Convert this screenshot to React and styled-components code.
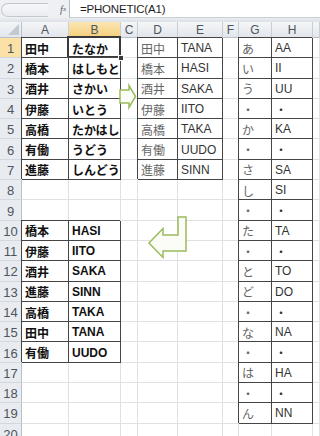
import React from 'react';
import styled, { createGlobalStyle, css } from 'styled-components';

const GlobalStyle = createGlobalStyle`
  html, body {
    margin: 0;
    padding: 0;
    background: #ffffff;
    overflow: hidden;
  }
  body {
    font-family: "Liberation Sans", "Noto Sans CJK JP", sans-serif;
  }
`;

const Window = styled.div`
  width: 320px;
  height: 436px;
  overflow: hidden;
  background: #e4e8ed;
`;

const FormulaBar = styled.div`
  display: flex;
  align-items: stretch;
  height: 18px;
  background: #eef0f3;
`;

const NameBox = styled.div`
  width: 46px;
  margin: 3px 0 1px 1px;
  border: 1px solid #c3c8cf;
  border-right: none;
  border-radius: 7px 0 0 7px;
  background: linear-gradient(#f6f7f9, #e9ecf0);
`;

const FxButton = styled.div`
  width: 21px;
  display: flex;
  align-items: center;
  justify-content: flex-end;
  padding-right: 3px;
  box-sizing: border-box;
  font-family: "Liberation Serif", serif;
  font-style: italic;
  font-size: 10px;
  color: #555d66;
  sub {
    font-size: 7px;
    vertical-align: -1px;
  }
`;

const FormulaInput = styled.div`
  flex: 1;
  display: flex;
  align-items: center;
  padding-left: 10px;
  background: #ffffff;
  border-left: 1px solid #b4bac3;
  border-bottom: 1px solid #c9ced5;
  font-size: 11.5px;
  letter-spacing: -0.2px;
  color: #1e1e1e;
`;

const Strip = styled.div`
  height: 4px;
  background: linear-gradient(#e9ecf0, #dde2e8);
`;

const Sheet = styled.div`
  position: relative;
  display: grid;
  grid-template-columns: 22px 47px 52px 17px 40px 45px 16px 33px 41px 1fr;
  grid-template-rows: 16px;
  grid-auto-rows: 20.3px;
  background: #ffffff;
`;

const headBase = css`
  box-sizing: border-box;
  display: flex;
  align-items: center;
  justify-content: center;
  color: #4d5560;
  font-family: "Liberation Sans", sans-serif;
`;

const Corner = styled.div`
  ${headBase};
  position: relative;
  background: linear-gradient(#f3f5f7, #e3e7ec);
  border-right: 1px solid #b9c0c9;
  border-bottom: 1px solid #b9c0c9;
  svg {
    position: absolute;
    right: 2px;
    bottom: 2px;
  }
`;

const ColHead = styled.div`
  ${headBase};
  font-size: 12px;
  border-right: 1px solid #c8ced6;
  border-bottom: 1px solid #b9c0c9;
  background: ${(p) =>
    p.$active
      ? 'linear-gradient(#fbe6b3, #f6cf7d)'
      : 'linear-gradient(#f5f6f8, #e2e6eb)'};
`;

const RowHead = styled.div`
  ${headBase};
  font-size: 13px;
  padding-top: 2px;
  border-right: 1px solid #b9c0c9;
  border-bottom: 1px solid #d3d8de;
  background: ${(p) => (p.$active ? '#fbe1a6' : '#e8ebef')};
`;

const Cell = styled.div`
  position: relative;
  box-sizing: border-box;
  display: flex;
  align-items: center;
  padding: 1px 0 0 3px;
  white-space: nowrap;
  overflow: visible;
  font-size: 12px;
  font-weight: ${(p) => (p.$bold ? 700 : 400)};
  color: ${(p) => p.$tone};
  border-right: 1px solid #dfe1e3;
  border-bottom: 1px solid #dfe1e3;
  background: #ffffff;

  ${(p) =>
    p.$boxed &&
    css`
      border-color: #454545;
      box-shadow: -1px -1px 0 0 #454545;
    `}

  ${(p) =>
    p.$selected &&
    css`
      &::after {
        content: '';
        position: absolute;
        left: -2px;
        top: -2px;
        right: -1px;
        bottom: -1px;
        border: 2px solid #3a3a3a;
      }
      &::before {
        content: '';
        position: absolute;
        right: -4px;
        bottom: -4px;
        width: 4px;
        height: 4px;
        background: #3a3a3a;
        border: 1px solid #ffffff;
        z-index: 2;
      }
    `}
`;

const Shapes = styled.svg`
  position: absolute;
  left: 0;
  top: 0;
  pointer-events: none;
`;

const COLS = ['A', 'B', 'C', 'D', 'E', 'F', 'G', 'H', 'I'];
const ROWS = Array.from({ length: 20 }, (_, i) => i + 1);

const kana = [
  ['あ', 'AA'], ['い', 'II'], ['う', 'UU'], ['・', '・'], ['か', 'KA'],
  ['・', '・'], ['さ', 'SA'], ['し', 'SI'], ['・', '・'], ['た', 'TA'],
  ['・', '・'], ['と', 'TO'], ['ど', 'DO'], ['・', '・'], ['な', 'NA'],
  ['・', '・'], ['は', 'HA'], ['・', '・'], ['ん', 'NN'],
];

const names = [
  ['田中', 'たなか', 'TANA'],
  ['橋本', 'はしもと', 'HASI'],
  ['酒井', 'さかい', 'SAKA'],
  ['伊藤', 'いとう', 'IITO'],
  ['高橋', 'たかはし', 'TAKA'],
  ['有働', 'うどう', 'UUDO'],
  ['進藤', 'しんどう', 'SINN'],
];

const sorted = [
  ['橋本', 'HASI'], ['伊藤', 'IITO'], ['酒井', 'SAKA'], ['進藤', 'SINN'],
  ['高橋', 'TAKA'], ['田中', 'TANA'], ['有働', 'UUDO'],
];

function cellInfo(col, row) {
  const info = { text: '', boxed: false, bold: false, tone: '#333333' };
  if (row <= 7 && (col === 'A' || col === 'B')) {
    const n = names[row - 1];
    info.text = col === 'A' ? n[0] : n[1];
    info.boxed = true;
    info.bold = true;
    info.tone = '#111111';
  }
  if (row <= 7 && (col === 'D' || col === 'E')) {
    const n = names[row - 1];
    info.text = col === 'D' ? n[0] : n[2];
    info.boxed = true;
    info.tone = col === 'D' ? '#666666' : '#333333';
  }
  if (row >= 10 && row <= 16 && (col === 'A' || col === 'B')) {
    const s = sorted[row - 10];
    info.text = col === 'A' ? s[0] : s[1];
    info.boxed = true;
    info.bold = true;
    info.tone = '#111111';
  }
  if (row <= 19 && (col === 'G' || col === 'H')) {
    const k = kana[row - 1];
    info.text = col === 'G' ? k[0] : k[1];
    info.boxed = true;
    info.tone = col === 'G' ? '#666666' : '#333333';
  }
  return info;
}

function Arrows() {
  return (
    <Shapes width="320" height="414" viewBox="0 22 320 414">
      <polygon
        points="120,90 129,90 129,85.5 135.5,96.5 129,107.5 129,103 120,103"
        fill="#fbfcf8"
        stroke="#9bbb59"
        strokeWidth="1.5"
        strokeLinejoin="miter"
      />
      <polygon
        points="178,217 186,217 186,251 163,251 163,257.5 149,243 163,228.5 163,235 178,235"
        fill="#fbfcf8"
        stroke="#9bbb59"
        strokeWidth="1.5"
        strokeLinejoin="miter"
      />
    </Shapes>
  );
}

export default function App() {
  return (
    <Window>
      <GlobalStyle />
      <FormulaBar>
        <NameBox />
        <FxButton>
          f<sub>x</sub>
        </FxButton>
        <FormulaInput>=PHONETIC(A1)</FormulaInput>
      </FormulaBar>
      <Strip />
      <Sheet>
        <Corner>
          <svg width="11" height="11" viewBox="0 0 11 11">
            <polygon points="11,0 11,11 0,11" fill="#c3c9d1" />
          </svg>
        </Corner>
        {COLS.map((c) => (
          <ColHead key={c} $active={c === 'B'}>
            {c === 'I' ? '' : c}
          </ColHead>
        ))}
        {ROWS.map((r) => (
          <React.Fragment key={r}>
            <RowHead $active={r === 1}>{r}</RowHead>
            {COLS.map((c) => {
              const info = cellInfo(c, r);
              return (
                <Cell
                  key={c + r}
                  $boxed={info.boxed}
                  $bold={info.bold}
                  $tone={info.tone}
                  $selected={c === 'B' && r === 1}
                >
                  {info.text}
                </Cell>
              );
            })}
          </React.Fragment>
        ))}
        <Arrows />
      </Sheet>
    </Window>
  );
}
